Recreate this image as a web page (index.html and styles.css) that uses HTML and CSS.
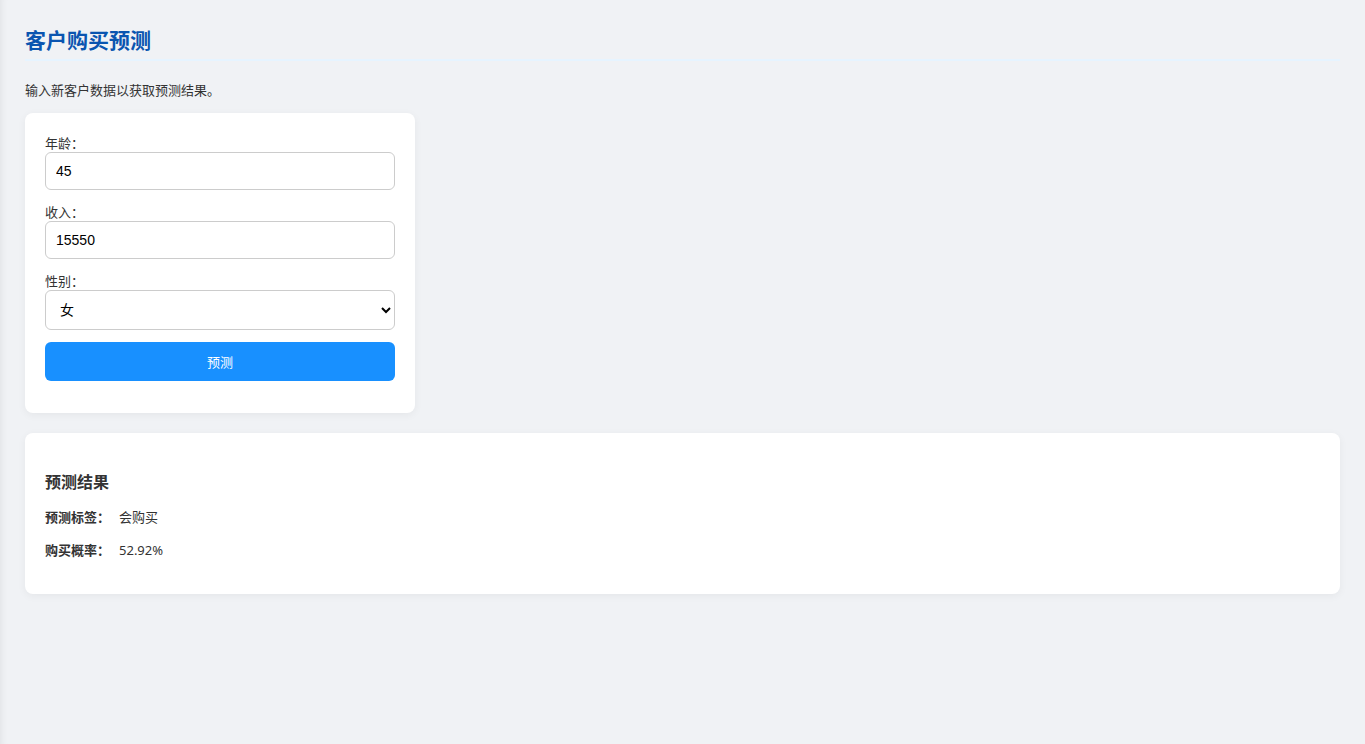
FILE: index.html
```html
<!DOCTYPE html>
<html lang="zh-CN">
<head>
  <meta charset="UTF-8" />
  <meta name="viewport" content="width=device-width, initial-scale=1.0">
  <title>客户购买预测</title>
  <link rel="stylesheet" href="styles.css">
</head>
<body>
  <div class="page">
    <h1 class="page-title">客户购买预测</h1>
    <p class="intro">输入新客户数据以获取预测结果。</p>

    <div class="card form-card">
      <form class="predict-form" onsubmit="return false;">
        <div class="form-group">
          <label for="age">年龄：</label>
          <input type="number" id="age" value="45">
        </div>
        <div class="form-group">
          <label for="income">收入：</label>
          <input type="number" id="income" value="15550">
        </div>
        <div class="form-group">
          <label for="gender">性别：</label>
          <select id="gender">
            <option>男</option>
            <option selected>女</option>
          </select>
        </div>
        <button type="submit" class="btn-predict">预测</button>
      </form>
    </div>

    <div class="card result-card">
      <h3>预测结果</h3>
      <p><strong>预测标签：</strong><span>会购买</span></p>
      <p><strong>购买概率：</strong><span>52.92%</span></p>
    </div>
  </div>
</body>
</html>
```

FILE: styles.css
```css
html {
  background-color: #f0f2f5;
}

body {
  margin: 0;
  padding: 0;
  font-family: "Segoe UI", "Noto Sans", "Noto Sans CJK SC", sans-serif;
  color: #333;
  font-size: 13px;
  min-height: 100vh;
  box-shadow: inset 7px 0 6px -5px rgba(0, 0, 0, 0.06);
}

.page {
  padding: 25px 25px;
}

.page-title {
  margin: 3px 0 0;
  padding-bottom: 5px;
  font-size: 21px;
  line-height: 26px;
  font-weight: 700;
  color: #0a55b0;
  border-bottom: 2px solid #e6f4ff;
  font-family: "Liberation Sans", "Noto Sans CJK SC", sans-serif;
}

.intro {
  margin: 20px 0 14px;
  line-height: 18px;
  font-size: 13px;
}

.card {
  background: #fff;
  border-radius: 8px;
  box-shadow: 0 2px 8px rgba(0, 0, 0, 0.05);
  padding: 20px;
}

.form-card {
  width: 350px;
  padding-bottom: 32px;
}

.form-group {
  margin-bottom: 13px;
}

.form-group label {
  display: block;
  line-height: 18px;
  margin-top: 1px;
  font-size: 13px;
  color: #333;
}

.form-group input,
.form-group select {
  display: block;
  width: 100%;
  box-sizing: border-box;
  height: 38px;
  padding: 0 10px;
  border: 1px solid #ccc;
  border-radius: 6px;
  font-family: "Liberation Sans", "Noto Sans CJK SC", sans-serif;
  font-size: 14px;
  color: #000;
  background: #fff;
}

.form-group select {
  height: 40px;
  padding: 0 10px;
}

.btn-predict {
  display: block;
  width: 100%;
  height: 39px;
  margin-top: -1px;
  border: none;
  border-radius: 6px;
  background-color: #1890ff;
  color: #fff;
  font-family: "Noto Sans CJK SC", sans-serif;
  font-size: 13px;
  cursor: pointer;
}

.result-card {
  margin-top: 20px;
}

.result-card h3 {
  margin: 18px 0 14px;
  font-size: 16px;
  line-height: 22px;
  font-weight: 700;
  color: #333;
}

.result-card p {
  margin: 0 0 13px;
  line-height: 20px;
  font-size: 13px;
}

.result-card p:last-child {
  margin-bottom: 14px;
}

.result-card strong {
  margin-right: 9px;
}
```
